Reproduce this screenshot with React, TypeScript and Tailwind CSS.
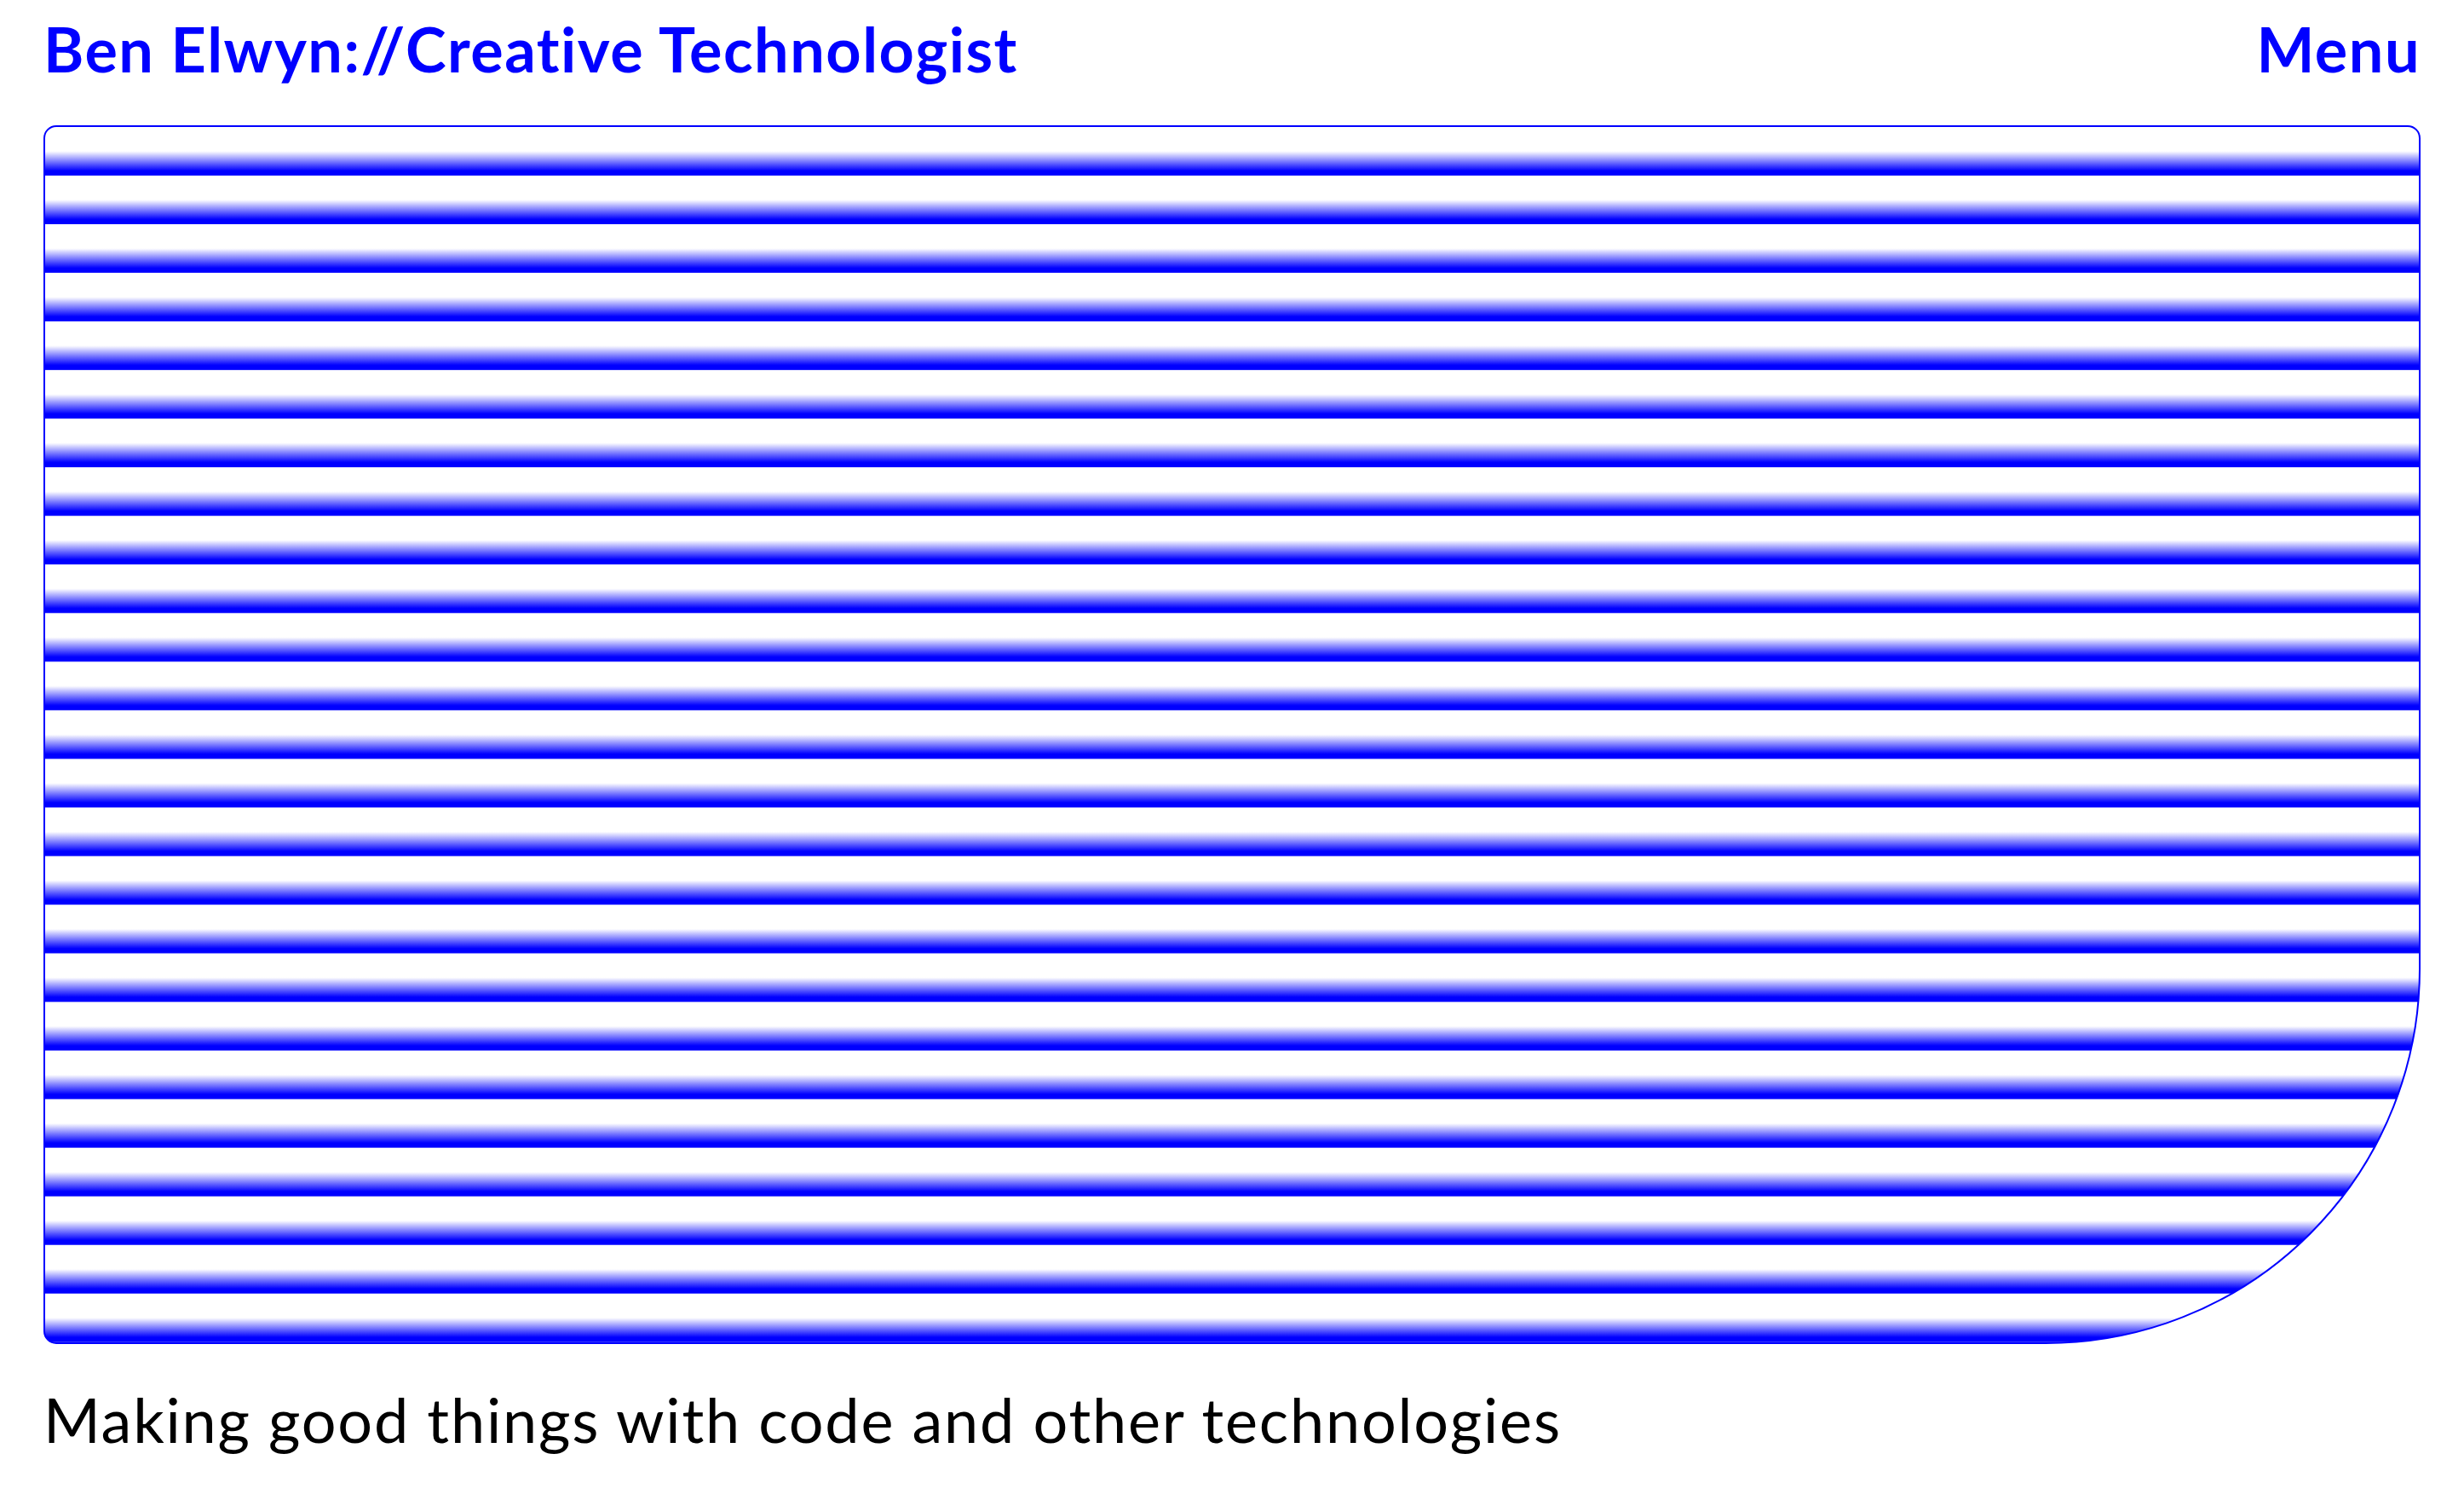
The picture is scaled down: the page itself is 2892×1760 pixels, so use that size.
export default function App() {
  return (
    <div className="min-h-screen bg-white px-[51px] pt-[21px] font-['Lato',sans-serif]">
      <header className="flex items-start justify-between text-[72px] font-bold leading-none tracking-[1.5px] text-[#0000ff]">
        <span>Ben Elwyn://Creative Technologist</span>
        <span>Menu</span>
      </header>

      {/* striped hero panel: each band fades white → blue, then hard edge */}
      <div className="mt-[54px] h-[1430px] rounded-[15px] rounded-br-[440px] border-2 border-[#0000ff] bg-[linear-gradient(to_bottom,#ffffff_50%,#0000ff_90%,#0000ff_100%)] bg-[length:100%_4%] bg-repeat-y" />

      <p className="mt-[52px] text-[72px] font-normal leading-none tracking-[1.8px] text-black">
        Making good things with code and other technologies
      </p>
    </div>
  );
}
